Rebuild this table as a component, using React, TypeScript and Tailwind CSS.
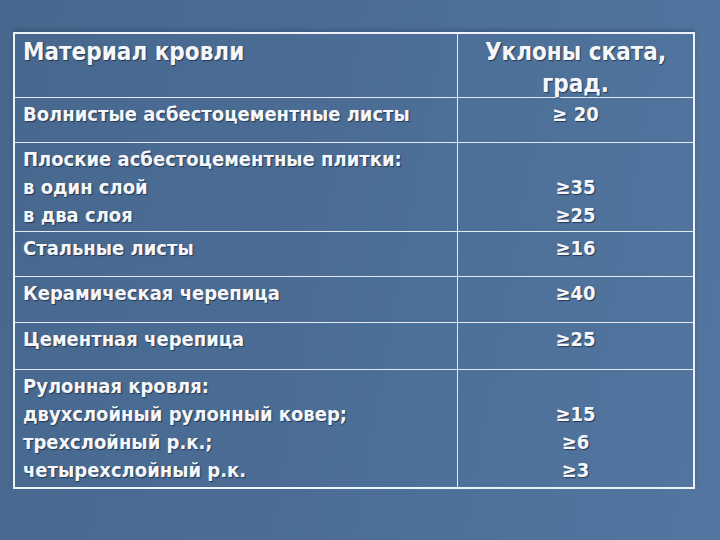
import React from 'react';

type Row = { left: string[]; right: string[]; h: string };

const rows: Row[] = [
  { left: ['Волнистые асбестоцементные листы'], right: ['≥ 20'], h: 'h-[45px]' },
  {
    left: ['Плоские асбестоцементные плитки:', 'в один слой', 'в два слоя'],
    right: ['', '≥35', '≥25'],
    h: 'h-[89px]',
  },
  { left: ['Стальные листы'], right: ['≥16'], h: 'h-[45px]' },
  { left: ['Керамическая черепица'], right: ['≥40'], h: 'h-[46px]' },
  { left: ['Цементная черепица'], right: ['≥25'], h: 'h-[47px]' },
  {
    left: ['Рулонная кровля:', 'двухслойный рулонный ковер;', 'трехслойный р.к.;', 'четырехслойный р.к.'],
    right: ['', '≥15', '≥6', '≥3'],
    h: 'h-[117px]',
  },
];

const Lines: React.FC<{ items: string[] }> = ({ items }) => (
  <>
    {items.map((t, i) => (
      <div key={i} className="h-[28px] leading-[28px] whitespace-nowrap">
        {t || '\u00a0'}
      </div>
    ))}
  </>
);

const App: React.FC = () => {
  return (
    <div
      className="w-[720px] h-[540px] overflow-hidden bg-[#4a6b93] bg-[linear-gradient(100deg,#47678e_0%,#4b6d95_45%,#5276a0_100%)] pt-[32px] pl-[13px] text-[#f5f7fa] font-bold [text-shadow:1px_1px_1px_rgba(20,35,60,0.7)]"
      style={{ fontFamily: '"DejaVu Sans Condensed", "DejaVu Sans", Verdana, sans-serif' }}
    >
      <div className="w-[682px] border-2 border-[#eef2f7] grid grid-cols-[443px_1fr] shadow-[0_-3px_3px_rgba(30,50,80,0.25)]">
        {/* Header */}
        <div className="h-[64px] border-r border-b border-[#e4eaf2] pl-[8px] pt-[2px] text-[24px] leading-[32px]">
          Материал кровли
        </div>
        <div className="h-[64px] border-b border-[#e4eaf2] pt-[2px] text-center text-[24px] leading-[32px]">
          Уклоны ската,
          <br />
          град.
        </div>

        {rows.map((r, i) => {
          const last = i === rows.length - 1;
          return (
            <React.Fragment key={i}>
              <div
                className={`${r.h} ${last ? '' : 'border-b'} border-r border-[#e4eaf2] pl-[8px] pt-[2px] text-[20px]`}
              >
                <Lines items={r.left} />
              </div>
              <div className={`${r.h} ${last ? '' : 'border-b'} border-[#e4eaf2] pt-[2px] text-center text-[20px]`}>
                <Lines items={r.right} />
              </div>
            </React.Fragment>
          );
        })}
      </div>
    </div>
  );
};

export default App;
